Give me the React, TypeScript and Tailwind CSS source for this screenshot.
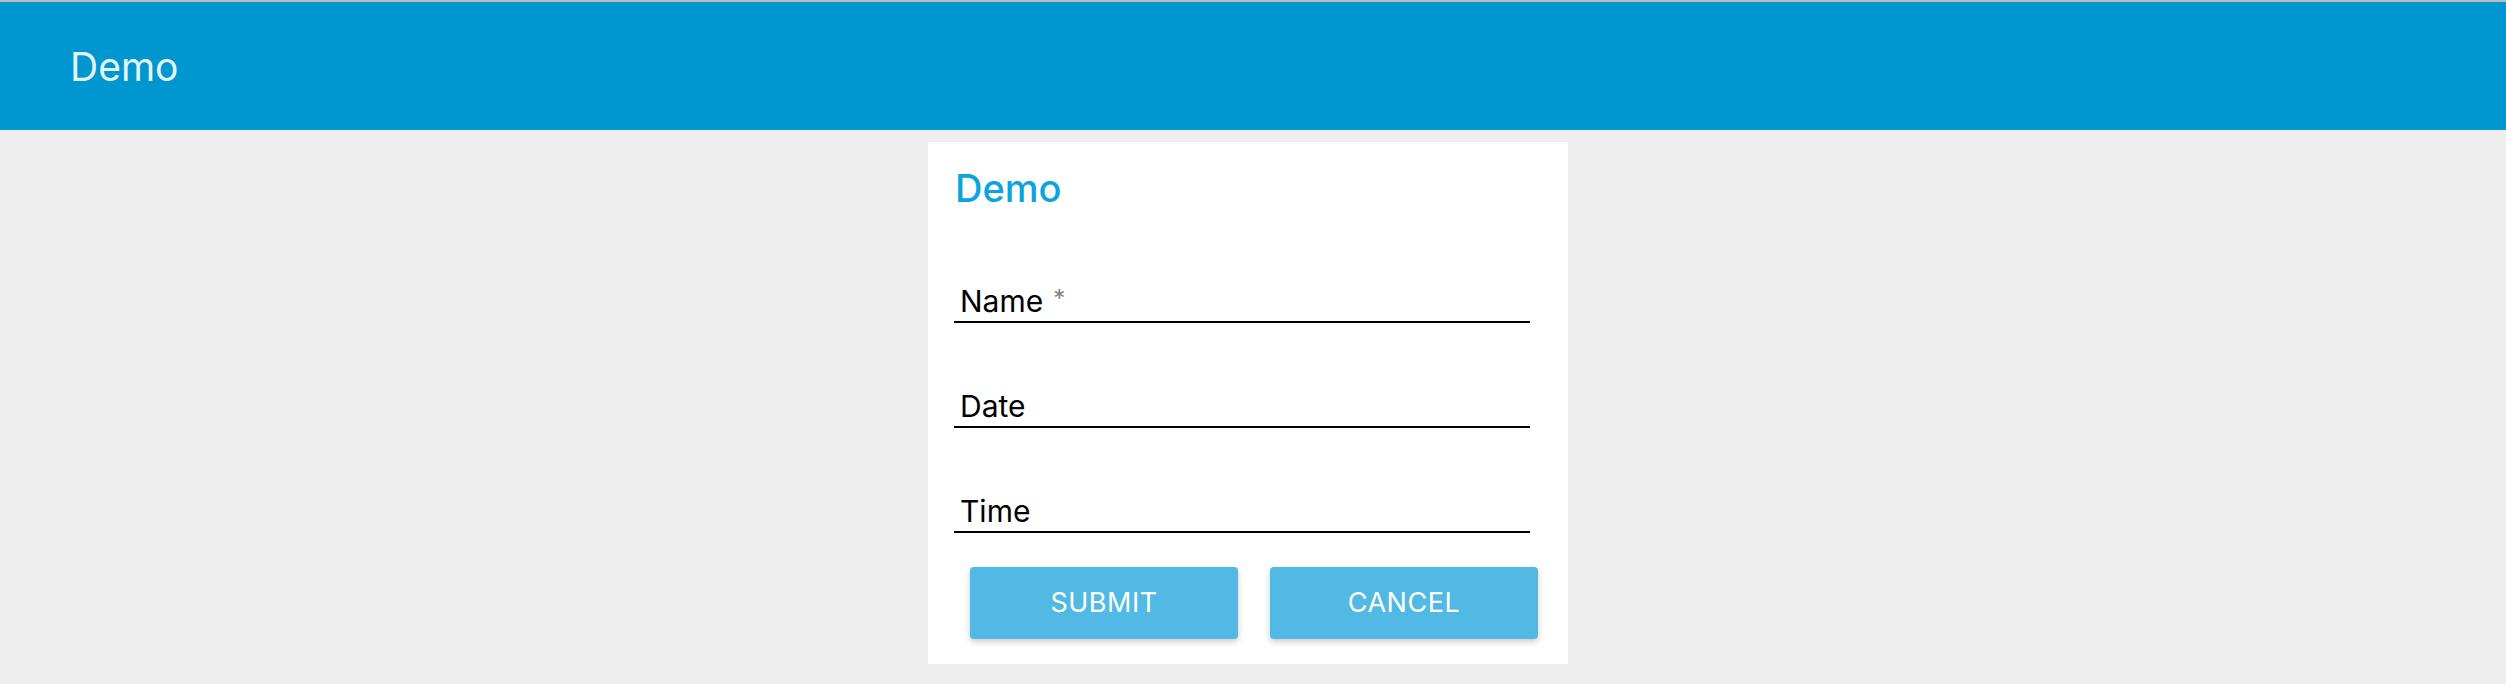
import React from "react";

const fields = [
  { label: "Name", required: true },
  { label: "Date", required: false },
  { label: "Time", required: false },
];

export default function App() {
  return (
    <div className="min-h-screen bg-[#eeeeee] font-['Inter',sans-serif]">
      <div className="h-[2px] bg-[#bdbdbd]" />
      <header className="flex h-[128px] items-center bg-[#0096d0] pl-[70px]">
        <h1 className="text-[39px] font-normal leading-none text-[#e3f4fb]">Demo</h1>
      </header>

      <div className="flex justify-center pt-[12px] pr-[10px]">
        <div className="w-[640px] bg-white pt-[27px] pb-[25px] pl-[26px] pr-[38px]">
          <h2 className="pl-[1px] text-[38px] font-medium leading-[38px] text-[#0aa5e0]">Demo</h2>

          <div className="mt-[76px] flex flex-col gap-[65px]">
            {fields.map((f) => (
              <div key={f.label} className="border-b-2 border-black pb-[2px] pl-[6px]">
                <span className="text-[30px] leading-[36px] text-black">
                  {f.label}
                  {f.required && (
                    <span className="ml-[10px] inline-block align-top text-[24px] leading-[32px] text-[#808080]">*</span>
                  )}
                </span>
              </div>
            ))}
          </div>

          <div className="mt-[34px] flex gap-[32px] pl-[16px]">
            <button className="h-[72px] w-[268px] shrink-0 rounded-[4px] bg-[#51b9e3] text-[27px] tracking-[0.5px] text-white shadow-[0_3px_6px_rgba(0,0,0,0.2)]">
              SUBMIT
            </button>
            <button className="h-[72px] w-[268px] shrink-0 rounded-[4px] bg-[#51b9e3] text-[27px] tracking-[0.5px] text-white shadow-[0_3px_6px_rgba(0,0,0,0.2)]">
              CANCEL
            </button>
          </div>
        </div>
      </div>
    </div>
  );
}
